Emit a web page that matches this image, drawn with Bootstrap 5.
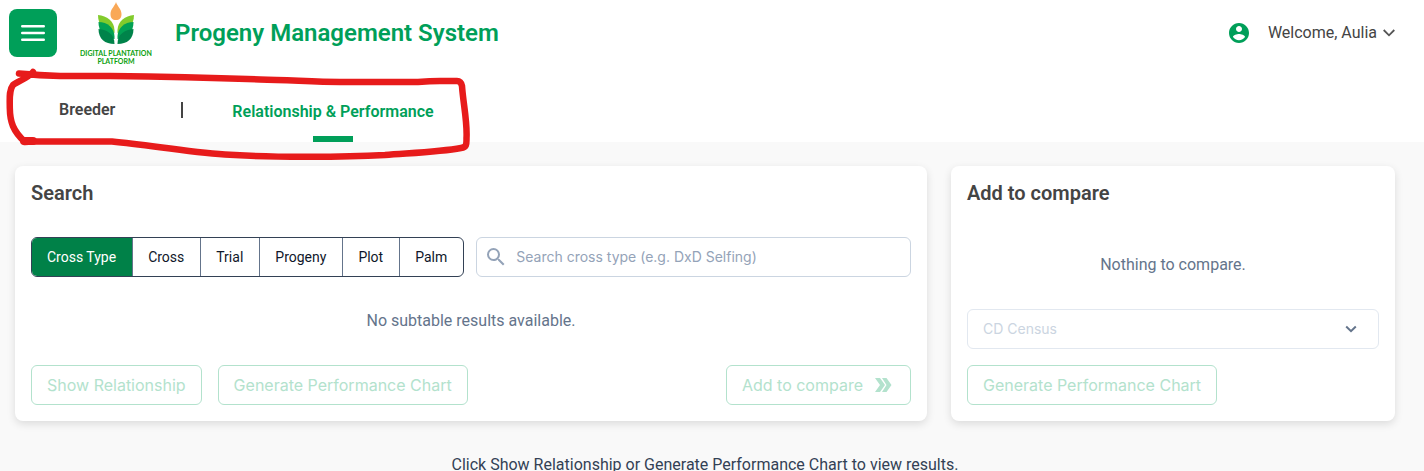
<!DOCTYPE html>
<html lang="en">
<head>
<meta charset="utf-8">
<meta name="viewport" content="width=device-width, initial-scale=1">
<title>Progeny Management System</title>
<link href="https://cdn.jsdelivr.net/npm/bootstrap@5.3.0/dist/css/bootstrap.min.css" rel="stylesheet">
<style>
  :root { --brand: #009f59; --ink: #444; --slate: #64748b; }
  body { font-family: Roboto, sans-serif; font-size: 16px; line-height: 24px; background: #f9f9f9; color: var(--ink); overflow-x: hidden; }
  .topbar { height: 66px; padding: 0 29px 0 9px; }
  .menu-btn { width: 48px; height: 48px; border: 0; border-radius: 8px; background: var(--brand); }
  .brand-logo { width: 72px; margin: 0 23px; color: #0c9f10; font: 700 7px/8px Lato, sans-serif; text-align: center; white-space: nowrap; }
  .app-title { font-size: 24px; line-height: 32px; font-weight: 600; color: var(--brand); }
  .tabs { height: 76px; padding-left: 59px; font-weight: 600; }
  .tabs a { color: var(--ink); text-decoration: none; }
  .tabs .current { color: var(--brand); height: 42px; }
  .tabs .current::after { content: ""; width: 40px; height: 6px; background: var(--brand); }
  .divider { width: 2px; height: 16px; margin: 0 49px 0 66px; background: var(--ink); }
  .marker { top: 0; left: 0; z-index: 2; pointer-events: none; }
  .user-btn { color: var(--ink); border: 0; background: none; padding: 0; }
  .user-name { margin: 0 6px 0 19px; }
  .board { display: grid; grid-template-columns: 1fr; gap: 24px; padding: 24px 29px 0 15px; }
  .board > .footnote { grid-column: 1 / -1; color: #334155; }
  @media (min-width: 992px) { .board { grid-template-columns: repeat(3, minmax(0, 1fr)); } .board .wide { grid-column: span 2; } }
  .panel { background: #fff; border-radius: 8px; padding: 15px 16px 16px; box-shadow: 0 3px 8px rgba(0,0,0,.12); }
  .panel h2 { font-size: 20px; line-height: 24px; font-weight: 600; margin: 0 0 32px; }
  .search-row { gap: 12px; }
  .segments { border: 1px solid #334155; border-radius: 6px; height: 40px; overflow: hidden; }
  .segments .btn { font-size: 14px; line-height: 20px; color: #0f172a; border: 0; border-left: 1px solid var(--slate); border-radius: 0; padding: 0 16px 0 15px; display: flex; align-items: center; }
  .segments .btn:first-of-type { border-left: 0; }
  .segments .btn-check:checked + .btn { background: #008148; color: #fff; }
  .search-box { height: 40px; border: 1px solid #cbd5e1; border-radius: 6px; padding: 0 10px 0 7px; }
  .search-box input { border: 0; outline: 0; background: none; font: 400 14px/20px Inter, sans-serif; min-width: 0; padding: 0; }
  .search-box input::placeholder { color: #94a3b8; opacity: 1; }
  .note { color: var(--slate); text-align: center; margin: 0; }
  .ghost { height: 40px; border: 1px solid #b3e2cd; border-radius: 6px; background: #fff; color: #b3e2cd; padding: 0 15px; font: 400 16px/24px Inter, sans-serif; }
  .census { height: 40px; border: 1px solid #e2e8f0; border-radius: 6px; color: #cbd5e1; padding: 0 15px; font: 400 14px/20px Inter, sans-serif; opacity: 1;
    background: #fff url("data:image/svg+xml,%3Csvg xmlns='http://www.w3.org/2000/svg' viewBox='0 0 12 8'%3E%3Cpath d='M1.2 1.5 6 6.2l4.8-4.7' fill='none' stroke='%2364748b' stroke-width='2'/%3E%3C/svg%3E") no-repeat right 21px center / 12px 8px; appearance: none; }
</style>
</head>
<body>
<header class="bg-white position-relative">
  <div class="topbar d-flex align-items-center">
    <button class="menu-btn d-flex align-items-center justify-content-center p-0" type="button" aria-label="Menu">
      <svg width="24" height="16" viewBox="0 0 24 16" fill="none" stroke="#fff" stroke-width="2.4" stroke-linecap="round"><path d="M1.2 1.3h21.6M1.2 8h21.6M1.2 14.7h21.6"/></svg>
    </button>
    <div class="brand-logo d-flex flex-column align-items-center">
      <svg width="40" height="44" viewBox="0 0 40 44" class="mb-1" aria-hidden="true">
        <path d="M20 1c1 4 5.500 7 5.500 12 0 4-2 6-5.500 6s-5.500-2-5.500-6c0-5 4.500-8 5.500-12z" fill="#f9a857"/>
        <g id="leaf">
          <path d="M2 14c9 1 16 6 16.500 15v3C8 30 2 24 2 14z" fill="#82cb2c"/>
          <path d="M2.500 21c9 0 15.500 6 16 14v3C8 37 2.500 31 2.500 21z" fill="#02a154"/>
          <path d="M2.500 28c9 1 16 5 16 15C9 43 2.500 38 2.500 28z" fill="#00834a"/>
        </g>
        <use href="#leaf" transform="matrix(-1 0 0 1 40 0)"/>
      </svg>
      <span>DIGITAL PLANTATION<br>PLATFORM</span>
    </div>
    <h1 class="app-title mb-0">Progeny Management System</h1>
    <button class="user-btn ms-auto d-flex align-items-center" type="button">
      <svg width="20" height="20" viewBox="2 2 20 20" fill="#009f59"><path d="M12 2C6.480 2 2 6.480 2 12s4.480 10 10 10 10-4.480 10-10S17.520 2 12 2zm0 3c1.660 0 3 1.340 3 3s-1.340 3-3 3-3-1.340-3-3 1.340-3 3-3zm0 14.200c-2.500 0-4.710-1.280-6-3.220.03-1.990 4-3.080 6-3.080s5.970 1.090 6 3.080c-1.290 1.940-3.500 3.220-6 3.220z"/></svg>
      <span class="user-name">Welcome, Aulia</span>
      <svg width="12" height="8" viewBox="0 0 12 8" fill="none" stroke="#555" stroke-width="1.800"><path d="M.7 1 6 6.300 11.300 1"/></svg>
    </button>
  </div>
  <nav class="tabs d-flex align-items-center" aria-label="Sections">
    <div class="d-flex align-items-center align-self-start pt-3 mt-3"><a href="#">Breeder</a><span class="divider"></span></div>
    <a href="#" class="current d-flex flex-column align-items-center justify-content-between align-self-end" aria-current="page">Relationship &amp; Performance</a>
  </nav>
  <svg class="marker position-absolute" width="480" height="164" viewBox="0 0 480 164" fill="none" stroke="#e71b1b" stroke-width="6.500" stroke-linecap="round" stroke-linejoin="round" aria-hidden="true">
    <path d="M19 73.500Q40 75.500 60 76H110Q190 77 260 79.500C290 80 315 82 340 82H418Q430 81 440 81H457Q461 81 462 86C463 102 467.500 122 466.500 138C466.500 144 467 147 461 148C440 152 410 153 385 155C340 157.500 270 157.500 225 154.500C185 152 150 145 112 141.500H32L25 142C13 131 10 122 9.800 108C9.700 98 9 90 13 85C18 81 27 79 33 72"/>
    <path d="M24 141h9" stroke-width="8"/>
  </svg>
</header>

<main>
  <div class="board">
    <section class="panel wide">
      <h2>Search</h2>
      <div class="search-row d-flex flex-wrap flex-md-nowrap">
        <div class="segments d-flex flex-shrink-0" role="group" aria-label="Search by">
          <input class="btn-check" type="radio" name="kind" id="k1" checked><label class="btn" for="k1">Cross Type</label>
          <input class="btn-check" type="radio" name="kind" id="k2"><label class="btn" for="k2">Cross</label>
          <input class="btn-check" type="radio" name="kind" id="k3"><label class="btn" for="k3">Trial</label>
          <input class="btn-check" type="radio" name="kind" id="k4"><label class="btn" for="k4">Progeny</label>
          <input class="btn-check" type="radio" name="kind" id="k5"><label class="btn" for="k5">Plot</label>
          <input class="btn-check" type="radio" name="kind" id="k6"><label class="btn" for="k6">Palm</label>
        </div>
        <label class="search-box d-flex align-items-center flex-grow-1">
          <svg width="24" height="24" viewBox="0 0 24 24" fill="#94a3b8" class="me-2"><path d="M15.500 14h-.79l-.28-.27A6.471 6.471 0 0 0 16 9.500 6.500 6.500 0 1 0 9.500 16c1.610 0 3.090-.59 4.230-1.570l.27.28v.79l5 4.990L20.490 19l-4.990-5zm-6 0C7.010 14 5 11.990 5 9.500S7.010 5 9.500 5 14 7.010 14 9.500 11.990 14 9.500 14z"/></svg>
          <input class="flex-grow-1" type="text" aria-label="Search" placeholder="Search cross type (e.g. DxD Selfing)">
        </label>
      </div>
      <p class="note py-3 my-3">No subtable results available.</p>
      <div class="d-flex flex-wrap gap-3">
        <button class="ghost" type="button" disabled>Show Relationship</button>
        <button class="ghost" type="button" disabled>Generate Performance Chart</button>
        <button class="ghost ms-auto d-flex align-items-center" type="button" disabled>Add to compare
          <svg class="ms-2" width="24" height="16" viewBox="0 0 24 16" fill="#b3e2cd"><path d="M4 1h5l5 7-5 7H4l5-7z"/><path d="M11 1h4.500l5 7-5 7H11l4.500-7z"/></svg>
        </button>
      </div>
    </section>
    <section class="panel d-flex flex-column">
      <h2>Add to compare</h2>
      <p class="note mb-auto pt-3">Nothing to compare.</p>
      <select class="census w-100 mb-3" aria-label="Census" disabled><option>CD Census</option></select>
      <button class="ghost align-self-start" type="button" disabled>Generate Performance Chart</button>
    </section>
    <p class="footnote text-center mb-0 pt-2">Click Show Relationship or Generate Performance Chart to view results.</p>
  </div>
</main>
<script src="https://cdn.jsdelivr.net/npm/bootstrap@5.3.0/dist/js/bootstrap.bundle.min.js"></script>
</body>
</html>
